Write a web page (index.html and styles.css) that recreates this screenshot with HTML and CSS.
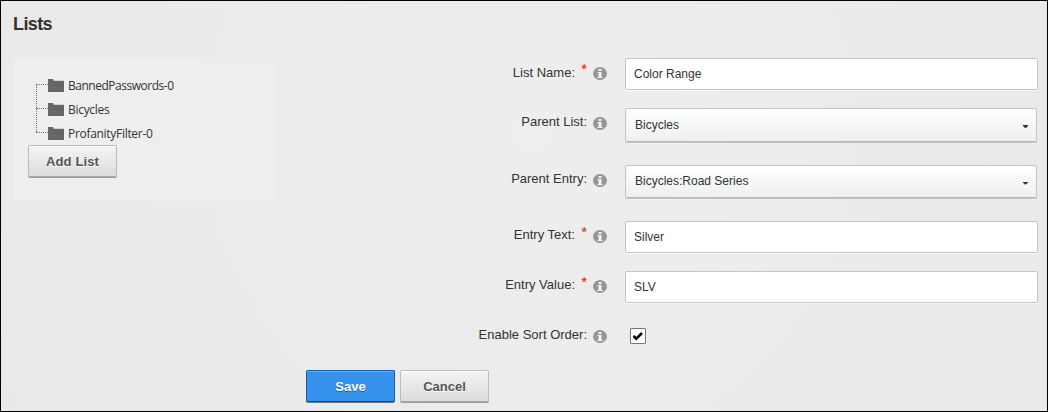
FILE: index.html
```html
<!DOCTYPE html>
<html lang="en">
<head>
<meta charset="utf-8">
<title>Lists</title>
<link rel="stylesheet" href="styles.css">
</head>
<body>
<svg class="defs" width="0" height="0">
  <symbol id="info" viewBox="0 0 14 13">
    <ellipse cx="7" cy="6.5" rx="7" ry="6.5" fill="#969696"/>
    <path d="M5 2h3v2H5zM4 5h4v5h1v1H4v-1h1V6H4z" fill="#f2f2f2" transform="translate(.5 0)"/>
  </symbol>
  <symbol id="folder" viewBox="0 0 16 13">
    <path d="M5 1h11v2H5z" fill="#d2d2d2"/>
    <path d="M0 0h5l1 2h10v11H0z" fill="#666"/>
  </symbol>
</svg>
<main class="page">
  <h1 class="title">Lists</h1>
  <div class="columns">
    <section class="tree-panel">
      <ul class="tree">
        <li class="node"><svg class="folder"><use href="#folder"/></svg><span class="node-name long">BannedPasswords-0</span></li>
        <li class="node"><svg class="folder"><use href="#folder"/></svg><span class="node-name">Bicycles</span></li>
        <li class="node"><svg class="folder"><use href="#folder"/></svg><span class="node-name">ProfanityFilter-0</span></li>
      </ul>
      <button class="button add">Add List</button>
    </section>
    <form class="form">
      <div class="row"><label class="label required name-label">List Name:</label><svg class="info"><use href="#info"/></svg><div class="field">Color Range</div></div>
      <div class="row select-row"><label class="label">Parent List:</label><svg class="info"><use href="#info"/></svg><div class="field select first">Bicycles<i class="arrow"></i></div></div>
      <div class="row entry-row"><label class="label">Parent Entry:</label><svg class="info"><use href="#info"/></svg><div class="field select">Bicycles:Road Series<i class="arrow"></i></div></div>
      <div class="row"><label class="label required">Entry Text:</label><svg class="info"><use href="#info"/></svg><div class="field">Silver</div></div>
      <div class="row"><label class="label required">Entry Value:</label><svg class="info"><use href="#info"/></svg><div class="field">SLV</div></div>
      <div class="row"><label class="label">Enable Sort Order:</label><svg class="info"><use href="#info"/></svg><span class="checkbox"><svg width="14" height="14" viewBox="0 0 14 14"><path d="M2.500 7l2.800 2.700L11 4" fill="none" stroke="#000" stroke-width="2.500"/></svg></span></div>
    </form>
  </div>
  <div class="actions"><button class="button primary">Save</button><button class="button">Cancel</button></div>
</main>
</body>
</html>
```
FILE: styles.css
```css
* { box-sizing: border-box; }
body { margin: 0; font-family: "Liberation Sans", Arial, sans-serif; color: #333; }
.defs { display: block; }
.page {
  width: 1048px; height: 412px; overflow: hidden;
  border: 1px solid #000;
  background: radial-gradient(circle at 530px 130px, #eee 0, #ebebeb 350px, #e9e9e9 650px);
}
.title { margin: 0; height: 57px; padding: 12px 0 0 12px; font-size: 18px; line-height: 22px; letter-spacing: -0.6px; }
.columns { display: flex; height: 312px; }
.tree-panel { width: 265px; height: 143px; margin-left: 12px; padding: 16px 15px; background: #eee; }
.tree { list-style: none; margin: 0; padding: 0 0 0 8px; }
.node { position: relative; display: flex; align-items: center; height: 24px; padding-left: 12px; }
.node::before { content: ""; position: absolute; left: 0; top: 10px; width: 12px; border-top: 1px dotted #777; }
.node:not(:last-child)::after { content: ""; position: absolute; left: 0; top: 10px; height: 24px; border-left: 1px dotted #777; }
.folder { width: 16px; height: 13px; margin: 0 4px 2px 0; }
.node-name { font: 12px/24px "Open Sans", "Noto Sans", sans-serif; letter-spacing: -0.3px; }
.long { letter-spacing: -0.48px; }
.button {
  width: 89px; height: 32px; padding: 0;
  border: 1px solid #bbb; border-bottom-color: #aaa; border-radius: 2px;
  background: linear-gradient(#f4f4f4, #dcdcdc);
  box-shadow: inset 0 1px #fff, 0 1px #999;
  color: #555; font: bold 13px "Liberation Sans", Arial, sans-serif;
  text-shadow: 0 1px #fff;
}
.add { display: block; margin-top: -1px; letter-spacing: 0.1px; }
.form { width: 759px; margin-left: 9px; }
.row { display: flex; height: 50px; }
.select-row { height: 57px; }
.entry-row { height: 56px; }
.label { position: relative; width: 300px; padding-top: 5px; text-align: right; font-size: 13px; line-height: 18px; }
.name-label { padding-top: 6px; }
.required { padding-right: 12px; }
.required::after { content: "*"; position: absolute; right: 0; top: 2px; font-size: 15px; color: #f00; }
.info { width: 14px; height: 13px; margin: 9px 18px 0 6px; }
.field {
  width: 413px; height: 32px; padding-left: 8px;
  border: 1px solid #c5c5c5; border-radius: 2px; background: #fff;
  box-shadow: 0 1px #f8f8f8;
  font-size: 12px; line-height: 30px;
}
.select {
  display: flex; justify-content: space-between;
  width: 412px; height: 33px; padding: 0 8px 0 9px;
  border-bottom-color: #b5b5b5; background: linear-gradient(#fff, #eef0f0);
  box-shadow: 0 1px #c8c8c8;
}
.first { height: 34px; line-height: 32px; }
.arrow { align-self: center; width: 5px; height: 3px; margin-top: 3px; background: #333; clip-path: polygon(0 0, 100% 0, 100% 35%, 60% 100%, 40% 100%, 0 35%); }
.checkbox { width: 16px; height: 16px; margin: 7px 0 0 5px; border: 1px solid #777; border-radius: 1px; background: #fff; }
.checkbox svg { display: block; }
.actions { display: flex; gap: 5px; padding-left: 305px; }
.primary {
  border-color: #0f5ca8; border-bottom-color: #0b4c90;
  background: #3691ed; color: #fff;
  box-shadow: inset 0 1px #64b0f8, 0 1px #777;
  text-shadow: 0 1px #1765b2;
}
```
